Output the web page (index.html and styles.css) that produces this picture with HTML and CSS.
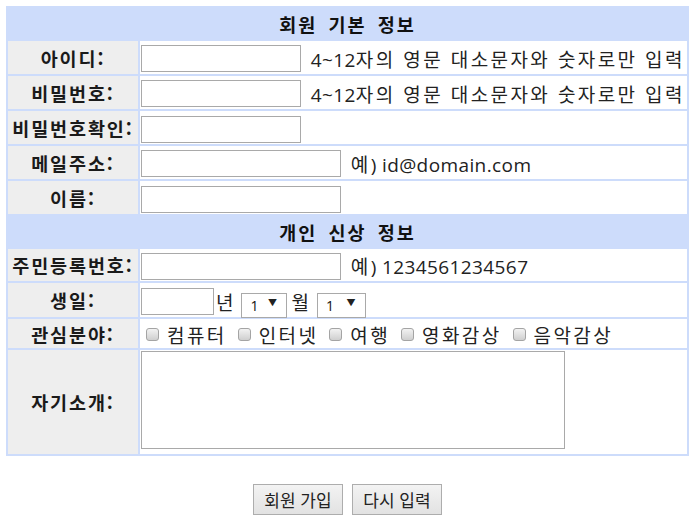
FILE: index.html
```html
<!DOCTYPE html>
<html lang="ko">
<head>
<meta charset="utf-8">
<title>회원 가입</title>
<link rel="stylesheet" href="styles.css">
</head>
<body>
<form class="join">
<table class="form">
  <tr><th colspan="2" class="sec">회원 기본 정보</th></tr>
  <tr class="r"><td class="lbl">아이디:</td><td class="val"><input class="in w160" type="text"> <span class="hint"><span class="en">4~12</span>자의 영문 대소문자와 숫자로만 입력</span></td></tr>
  <tr class="r"><td class="lbl">비밀번호:</td><td class="val"><input class="in w160" type="password"> <span class="hint"><span class="en">4~12</span>자의 영문 대소문자와 숫자로만 입력</span></td></tr>
  <tr class="r"><td class="lbl">비밀번호확인:</td><td class="val"><input class="in w160" type="password"></td></tr>
  <tr class="r"><td class="lbl">메일주소:</td><td class="val"><input class="in w200" type="text"> <span class="hint">예<span class="en">) id@domain.com</span></span></td></tr>
  <tr class="r"><td class="lbl">이름:</td><td class="val"><input class="in w200" type="text"></td></tr>
  <tr><th colspan="2" class="sec">개인 신상 정보</th></tr>
  <tr class="r2"><td class="lbl">주민등록번호:</td><td class="val"><input class="in w200" type="text"> <span class="hint">예<span class="en">) 1234561234567</span></span></td></tr>
  <tr class="r3"><td class="lbl">생일:</td><td class="val"><input class="in w73" type="text"><span class="unit first">년</span><span class="sel w46"><select><option>1</option></select></span><span class="unit">월</span><span class="sel w49"><select><option>1</option></select></span></td></tr>
  <tr class="r4"><td class="lbl">관심분야:</td><td class="val checks"><label class="chk"><input type="checkbox">컴퓨터</label><label class="chk"><input type="checkbox">인터넷</label><label class="chk"><input type="checkbox">여행</label><label class="chk"><input type="checkbox">영화감상</label><label class="chk"><input type="checkbox">음악감상</label></td></tr>
  <tr class="r5"><td class="lbl">자기소개:</td><td class="val top"><textarea class="intro"></textarea></td></tr>
</table>
<div class="actions">
  <button type="submit" class="btn">회원 가입</button>
  <button type="reset" class="btn">다시 입력</button>
</div>
</form>
</body>
</html>
```
FILE: styles.css
```css
html, body {
  margin: 0;
  padding: 0;
  background: #ffffff;
}
body {
  padding: 6px 6px 0 6px;
  font-family: "Noto Sans CJK KR", "Noto Sans", sans-serif;
  color: #1a1a1a;
  font-size: 18px;
}
.form {
  width: 683px;
  border-collapse: separate;
  border-spacing: 2px;
  background: #cddcfb;
}
.form td, .form th {
  padding: 0 1px;
}
.sec {
  height: 31px;
  font-weight: bold;
  font-size: 18.5px;
  letter-spacing: 2px;
  word-spacing: 4px;
  text-align: center;
  color: #111;
  background: #cddcfb;
}
.lbl {
  width: 128px;
  background: #eeeeee;
  font-weight: bold;
  font-size: 18.5px;
  text-align: center;
  white-space: nowrap;
  letter-spacing: 1.9px;
  color: #1a1a1a;
}
.val {
  background: #ffffff;
  white-space: nowrap;
  font-size: 19px;
  letter-spacing: 2.4px;
  color: #222;
}
.r td { height: 33px; }
.r2 td { height: 32px; }
.r3 td { height: 34px; }
.r4 td { height: 29px; }
.r5 td { height: 104px; }
.val.top { vertical-align: top; }
.in {
  box-sizing: border-box;
  height: 27px;
  border: 1px solid #a9a9a9;
  padding: 0 2px;
  margin: 0;
  vertical-align: middle;
  font-size: 14px;
  background: #fff;
}
.w160 { width: 160px; }
.w200 { width: 200px; }
.w73 { width: 73px; }
.hint {
  vertical-align: middle;
  margin-left: 2px;
}
.en {
  font-family: "Open Sans", "Noto Sans", sans-serif;
  letter-spacing: 0.4px;
}
.unit {
  vertical-align: middle;
  margin: 0 8px 0 4px;
  letter-spacing: 0;
}
.unit.first { margin-left: 2px; margin-right: 8px; }
.sel {
  position: relative;
  display: inline-block;
  vertical-align: middle;
  height: 25px;
}
.sel.w46 { width: 46px; }
.sel.w49 { width: 49px; }
.sel select {
  -webkit-appearance: none;
  appearance: none;
  box-sizing: border-box;
  width: 100%;
  height: 25px;
  border: 1px solid #a9a9a9;
  border-radius: 0;
  background: #fff;
  font-family: "Open Sans", Arial, sans-serif;
  font-size: 14px;
  padding: 0 0 0 8px;
  color: #111;
  margin: 0;
}
.sel::after {
  content: "▼";
  position: absolute;
  right: 8px;
  top: 7px;
  font-size: 9px;
  color: #222;
  pointer-events: none;
}
.form td.checks { padding-left: 6px; }
.chk {
  display: inline-flex;
  align-items: center;
  margin-right: 11px;
}
.chk input {
  -webkit-appearance: none;
  appearance: none;
  box-sizing: border-box;
  width: 13px;
  height: 13px;
  margin: 1px 8px 0 0;
  border: 1px solid #a4a4a4;
  border-radius: 3px;
  background: linear-gradient(#f2f2f2, #cfcfcf);
}
.intro {
  box-sizing: border-box;
  display: inline-block;
  width: 424px;
  height: 98px;
  margin: 1px 0 0 0;
  border: 1px solid #a9a9a9;
  resize: none;
  vertical-align: top;
}
.actions {
  display: flex;
  justify-content: center;
  gap: 9px;
  padding-top: 28px;
  width: 683px;
}
.btn {
  box-sizing: border-box;
  width: 90px;
  height: 31px;
  border: 1px solid #adadad;
  background: linear-gradient(#f3f3f3, #e2e2e2);
  font-family: "Noto Sans CJK KR", sans-serif;
  font-size: 17px;
  color: #222;
  padding: 0;
}
```
